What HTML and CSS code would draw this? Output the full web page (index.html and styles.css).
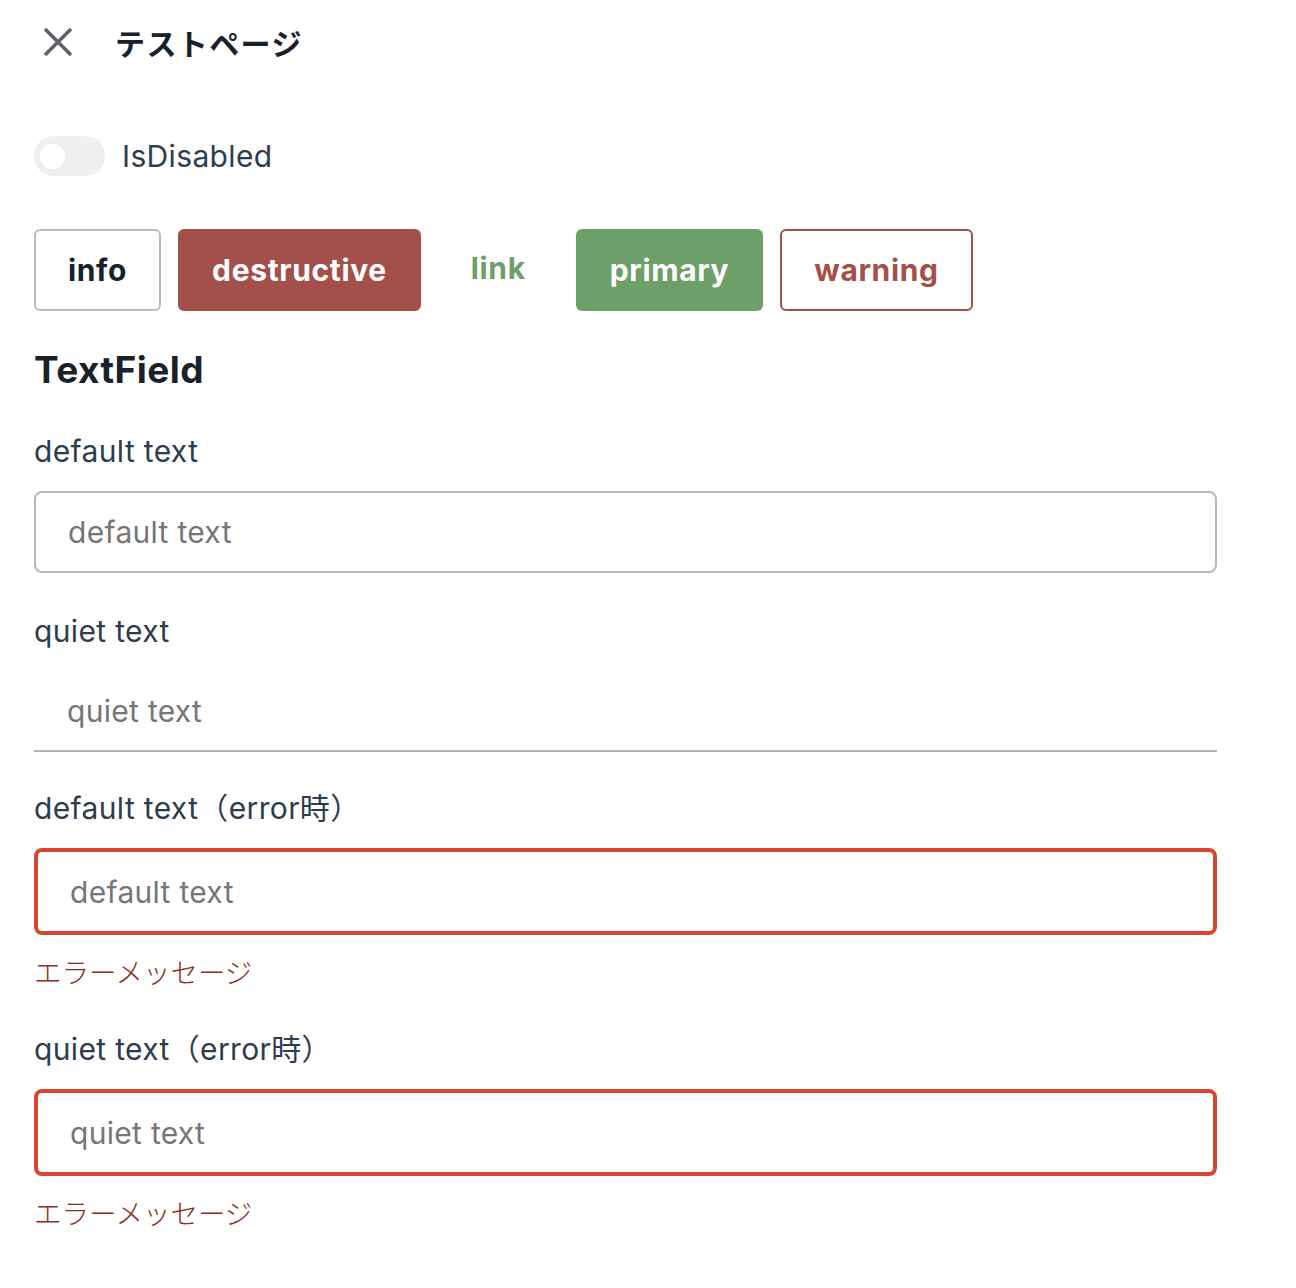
FILE: index.html
```html
<!DOCTYPE html>
<html lang="ja">
<head>
<meta charset="utf-8">
<title>テストページ</title>
<link rel="stylesheet" href="styles.css">
</head>
<body>
<div class="page">
  <header class="header">
    <button class="close" aria-label="close">
      <svg width="30" height="30" viewBox="0 0 30 30"><path d="M2 2 L28 28 M28 2 L2 28" stroke="#5f6367" stroke-width="3.6" stroke-linecap="butt" fill="none"/></svg>
    </button>
    <h1 class="title">テストページ</h1>
  </header>

  <div class="toggle-row">
    <span class="toggle"><span class="knob"></span></span>
    <span class="toggle-label">IsDisabled</span>
  </div>

  <div class="buttons">
    <button class="btn btn-info">info</button>
    <button class="btn btn-destructive">destructive</button>
    <button class="btn btn-link">link</button>
    <button class="btn btn-primary">primary</button>
    <button class="btn btn-warning">warning</button>
  </div>

  <h2 class="section-title">TextField</h2>

  <div class="field">
    <label class="label">default text</label>
    <input class="input input-default" placeholder="default text">
  </div>

  <div class="field">
    <label class="label">quiet text</label>
    <input class="input input-quiet" placeholder="quiet text">
  </div>

  <div class="field field-error">
    <label class="label">default text（error時）</label>
    <input class="input input-error" placeholder="default text">
    <div class="error-msg">エラーメッセージ</div>
  </div>

  <div class="field field-error">
    <label class="label">quiet text（error時）</label>
    <input class="input input-error" placeholder="quiet text">
    <div class="error-msg">エラーメッセージ</div>
  </div>
</div>
</body>
</html>
```

FILE: styles.css
```css
* { box-sizing: border-box; }
body {
  margin: 0;
  background: #ffffff;
  font-family: Inter, "Noto Sans CJK JP", sans-serif;
  color: #2e3d4e;
}
.page {
  width: 1217px;
  padding-left: 34px;
}
.header {
  height: 84px;
  display: flex;
  align-items: center;
}
.close {
  border: 0;
  background: none;
  padding: 0;
  margin-left: 9px;
  width: 30px;
  height: 30px;
  display: flex;
}
.title {
  margin: 0 0 0 42px;
  font-family: "Noto Sans CJK JP", sans-serif;
  font-weight: 700;
  font-size: 30px;
  letter-spacing: 1.4px;
  color: #19222b;
}
.toggle-row {
  margin-top: 52px;
  display: flex;
  align-items: center;
  height: 40px;
}
.toggle {
  width: 71px;
  height: 40px;
  border-radius: 20px;
  background: #eef0f0;
  display: flex;
  align-items: center;
  padding-left: 6px;
}
.knob {
  width: 25px;
  height: 25px;
  border-radius: 50%;
  background: #ffffff;
}
.toggle-label {
  margin-left: 17px;
  font-size: 30px;
  letter-spacing: 0.35px;
  color: #2e3d4e;
}
.buttons {
  margin-top: 53px;
  display: flex;
  gap: 17px;
}
.btn {
  height: 82px;
  padding: 0 32px;
  border: 2px solid transparent;
  border-radius: 6px;
  font-family: Inter, sans-serif;
  font-weight: 700;
  font-size: 30px;
  letter-spacing: 0.65px;
  background: none;
}
.btn-info { border-color: #b9bdc1; color: #19222b; background: #fff; }
.btn-destructive { background: #a4504a; color: #ffffff; }
.btn-link { color: #6da068; padding: 0 31px 4px; }
.btn-primary { background: #6da068; color: #ffffff; }
.btn-warning { border-color: #a4504a; color: #a4504a; background: #fff; }
.section-title {
  margin: 39px 0 0;
  height: 40px;
  line-height: 40px;
  font-size: 37px;
  font-weight: 700;
  letter-spacing: 0.45px;
  color: #19222b;
}
.field {
  width: 1183px;
  margin-top: 41px;
  display: flex;
  flex-direction: column;
}
.field + .field { margin-top: 38px; }
.field + .field-error { margin-top: 36px; }
.field-error + .field-error { margin-top: 38px; }
.label {
  line-height: 40px;
  font-size: 30px;
  letter-spacing: 0.35px;
  color: #2e3d4e;
  margin-bottom: 20px;
}
.input {
  height: 82px;
  width: 100%;
  font-family: Inter, sans-serif;
  font-size: 30px;
  letter-spacing: 0.3px;
  color: #2e3d4e;
  outline: none;
  background: #fff;
}
.input::placeholder { color: #767676; }
.input-default {
  border: 2px solid #b7babd;
  border-radius: 8px;
  padding: 0 32px;
}
.input-quiet {
  height: 81px;
  border: 0;
  border-bottom: 2px solid #b3b6b9;
  border-radius: 0;
  padding: 0 33px 0 33px;
}
.input-error {
  height: 87px;
  border: 4px solid #d8452f;
  border-radius: 8px;
  padding: 0 32px;
  margin-top: 0;
}
.error-msg {
  margin-top: 16px;
  line-height: 40px;
  font-family: "Noto Sans CJK JP", sans-serif;
  font-weight: 300;
  font-size: 27.5px;
  color: #8b2d22;
}
```
